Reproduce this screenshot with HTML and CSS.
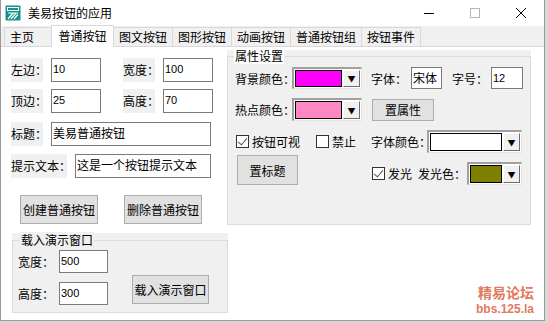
FILE: index.html
```html
<!DOCTYPE html>
<html lang="zh-CN">
<head>
    <meta charset="UTF-8">
    <title>美易按钮的应用</title>
    <link rel="stylesheet" href="styles.css">
</head>
<body>
    <div class="window">
        <div class="titlebar">
            <span class="app-icon">
                <svg width="16" height="16" viewBox="0 0 16 16">
                    <rect x="0.5" y="0.5" width="15" height="15" rx="1" fill="#16918c"/>
                    <rect x="2.5" y="2.5" width="11" height="3" fill="none" stroke="#fff" stroke-width="1"/>
                    <path d="M3 14 L8 8 M6 14 L11 8 M9 14 L13 9.5 M3 8 H13" stroke="#fff" stroke-width="1.2" fill="none"/>
                </svg>
            </span>
            <span class="title">美易按钮的应用</span>
            <div class="caption">
                <span class="cap-btn">
                    <svg width="10" height="10" viewBox="0 0 10 10"><path d="M0 5.5 H10" stroke="#000" stroke-width="1"/></svg>
                </span>
                <span class="cap-btn">
                    <svg width="10" height="10" viewBox="0 0 10 10"><rect x="0.5" y="0.5" width="9" height="9" fill="none" stroke="#b4b4b4" stroke-width="1"/></svg>
                </span>
                <span class="cap-btn">
                    <svg width="10" height="10" viewBox="0 0 10 10"><path d="M0 0 L10 10 M10 0 L0 10" stroke="#000" stroke-width="1"/></svg>
                </span>
            </div>
        </div>

        <div class="tabs">
            <span class="tab tab-home">主页</span>
            <span class="tab active">普通按钮</span>
            <span class="tab">图文按钮</span>
            <span class="tab">图形按钮</span>
            <span class="tab">动画按钮</span>
            <span class="tab">普通按钮组</span>
            <span class="tab">按钮事件</span>
        </div>

        <div class="page">
            <div class="left-col">
                <div class="row row-pos">
                    <span class="lbl w32">左边：</span>
                    <span class="edit num w50">10</span>
                    <span class="lbl w32 ml22">宽度：</span>
                    <span class="edit num w50">100</span>
                </div>
                <div class="row row-size">
                    <span class="lbl w32">顶边：</span>
                    <span class="edit num w50">25</span>
                    <span class="lbl w32 ml22">高度：</span>
                    <span class="edit num w50">70</span>
                </div>
                <div class="row row-title">
                    <span class="lbl w32">标题：</span>
                    <span class="edit w160">美易普通按钮</span>
                </div>
                <div class="row row-tip">
                    <span class="lbl w56">提示文本：</span>
                    <span class="edit w136">这是一个按钮提示文本</span>
                </div>
                <div class="row row-actions">
                    <button class="btn btn-create">创建普通按钮</button>
                    <button class="btn btn-delete">删除普通按钮</button>
                </div>

                <div class="group demo-group">
                    <div class="frame">
                        <span class="legend">载入演示窗口</span>
                        <div class="demo-body">
                            <div class="demo-fields">
                                <div class="demo-row">
                                    <span class="demo-lbl">宽度：</span>
                                    <span class="edit num demo-edit">500</span>
                                </div>
                                <div class="demo-row">
                                    <span class="demo-lbl">高度：</span>
                                    <span class="edit num demo-edit">300</span>
                                </div>
                            </div>
                            <button class="btn btn-load">载入演示窗口</button>
                        </div>
                    </div>
                </div>
            </div>

            <div class="group props-group">
                <div class="frame">
                    <span class="legend legend-props">属性设置</span>
                    <div class="prow prow-1">
                        <span class="plbl w57">背景颜色：</span>
                        <span class="combo w70">
                            <span class="swatch" style="background:#ff00ff"></span>
                            <span class="drop">▼</span>
                        </span>
                        <span class="plbl w40 ml9">字体：</span>
                        <span class="edit font-edit w31">宋体</span>
                        <span class="plbl w39 ml10">字号：</span>
                        <span class="edit num w32">12</span>
                    </div>
                    <div class="prow prow-2">
                        <span class="plbl w57">热点颜色：</span>
                        <span class="combo w70">
                            <span class="swatch" style="background:#ff88c4"></span>
                            <span class="drop">▼</span>
                        </span>
                        <button class="btn btn-prop">置属性</button>
                    </div>
                    <div class="prow prow-3">
                        <label class="check w80 ml1"><span class="box checked"></span>按钮可视</label>
                        <label class="check w55"><span class="box"></span>禁止</label>
                        <span class="plbl w56">字体颜色：</span>
                        <span class="combo w95">
                            <span class="swatch" style="background:#ffffff"></span>
                            <span class="drop">▼</span>
                        </span>
                    </div>
                    <div class="prow prow-4">
                        <button class="btn btn-caption">置标题</button>
                        <div class="glow">
                            <label class="check w46"><span class="box checked"></span>发光</label>
                            <span class="plbl w49">发光色：</span>
                            <span class="combo w55">
                                <span class="swatch" style="background:#808000"></span>
                                <span class="drop">▼</span>
                            </span>
                        </div>
                    </div>
                </div>
            </div>
        </div>

        <div class="watermark">
            <div class="wm-cn">精易论坛</div>
            <div class="wm-en">bbs.125.la</div>
        </div>
    </div>
</body>
</html>
```

FILE: styles.css
```css
* {
    box-sizing: border-box;
}

body {
    margin: 0;
    background: #d8d8d8;
    font-family: "Noto Sans CJK SC", "Liberation Sans", sans-serif;
    font-size: 12px;
    color: #000;
}

.window {
    position: relative;
    width: 545px;
    height: 321px;
    background: #fff;
    border: 1px solid #9a9a9a;
    border-top: none;
    overflow: hidden;
}

/* title bar */
.titlebar {
    height: 26px;
    display: flex;
    align-items: center;
    background: #fff;
}

.app-icon {
    width: 16px;
    height: 16px;
    margin-left: 4px;
    display: flex;
}

.title {
    margin-left: 7px;
    line-height: 16px;
}

.caption {
    margin-left: auto;
    display: flex;
    height: 26px;
}

.cap-btn {
    width: 46px;
    display: flex;
    align-items: center;
    justify-content: center;
}

/* tabs */
.tabs {
    height: 21px;
    background: #f0f0f0;
    border-bottom: 1px solid #d9d9d9;
    display: flex;
    align-items: flex-end;
    padding-left: 4px;
}

.tab {
    height: 19px;
    border: 1px solid #d9d9d9;
    border-bottom: none;
    margin-left: -1px;
    background: #f0f0f0;
    line-height: 17px;
    text-align: center;
    padding: 0 5px;
    white-space: nowrap;
}

.tab-home {
    width: 48px;
    text-align: left;
    padding-left: 5px;
}

.tab.active {
    height: 22px;
    margin-bottom: -1px;
    background: #fff;
    width: 63px;
    line-height: 20px;
    position: relative;
}

/* page */
.page {
    display: flex;
    height: 273px;
    padding-left: 10px;
}

.left-col {
    width: 217px;
    padding-top: 11px;
}

.row {
    display: flex;
    height: 24px;
    align-items: stretch;
}

.row-size {
    margin-top: 7px;
}

.row-title {
    margin-top: 9px;
}

.row-tip {
    margin-top: 8px;
}

.row-actions {
    margin-top: 17px;
    height: 29px;
}

.lbl {
    background: #f0f0f0;
    line-height: 24px;
    white-space: nowrap;
    margin-right: 8px;
}

.edit {
    border: 1px solid #7a7a7a;
    background: #fff;
    line-height: 20px;
    padding-left: 1px;
    white-space: nowrap;
    overflow: hidden;
}

.num {
    font-family: "Liberation Sans", sans-serif;
    font-size: 11px;
}

.w31 { width: 31px; }
.w32 { width: 32px; }
.w39 { width: 39px; }
.w40 { width: 40px; }
.w46 { width: 46px; }
.w49 { width: 49px; }
.w50 { width: 50px; }
.w55 { width: 55px; }
.w56 { width: 56px; }
.w57 { width: 57px; }
.w70 { width: 70px; }
.w80 { width: 80px; }
.w95 { width: 95px; }
.w136 { width: 136px; }
.w160 { width: 160px; }
.ml1 { margin-left: 1px; }
.ml9 { margin-left: 9px; }
.ml10 { margin-left: 10px; }
.ml22 { margin-left: 22px; }

.btn {
    font: inherit;
    background: #e1e1e1;
    border: 1px solid #adadad;
    padding: 0;
    color: #000;
    white-space: nowrap;
}

.btn-create {
    width: 78px;
    margin-left: 9px;
}

.btn-delete {
    width: 78px;
    margin-left: 26px;
}

/* group boxes */
.group {
    background: #f0f0f0;
}

.frame {
    position: relative;
    height: 100%;
    border: 1px solid #dcdcdc;
}

.legend {
    position: absolute;
    top: -9px;
    left: 7px;
    padding: 0 1px;
    line-height: 16px;
    background: #f0f0f0;
}

.demo-group {
    margin-top: 9px;
    margin-left: 1px;
    width: 216px;
    height: 80px;
    padding-top: 7px;
}

.demo-body {
    display: flex;
    padding: 9px 0 0 5px;
}

.demo-row {
    display: flex;
    height: 23px;
    align-items: center;
}

.demo-row + .demo-row {
    margin-top: 9px;
}

.demo-lbl {
    width: 41px;
}

.demo-edit {
    width: 49px;
    height: 23px;
}

.btn-load {
    width: 77px;
    height: 29px;
    margin: 25px 0 0 24px;
}

.props-group {
    margin-left: -1px;
    margin-top: 3px;
    width: 304px;
    height: 175px;
    padding-top: 6px;
}

.legend-props {
    background: #fff;
    top: -9px;
    left: 6px;
}

.prow {
    display: flex;
    align-items: center;
    padding-left: 7px;
}

.prow-1 {
    margin-top: 10px;
    height: 22px;
}

.prow-2 {
    margin-top: 9px;
    height: 23px;
}

.prow-3 {
    margin-top: 9px;
    height: 23px;
}

.prow-4 {
    margin-top: 2px;
    height: 30px;
    align-items: flex-start;
}

.plbl {
    white-space: nowrap;
}

.font-edit,
.prow .num {
    height: 22px;
}

.combo {
    height: 100%;
    display: flex;
    align-items: stretch;
    border-top: 2px solid #a0a0a0;
    border-left: 2px solid #a0a0a0;
    border-right: 1px solid #e3e3e3;
    border-bottom: 1px solid #e3e3e3;
    background: #fff;
    padding: 1px;
}

.swatch {
    flex: 1;
    border: 1px solid #000;
}

.drop {
    width: 17px;
    margin-left: 1px;
    background: #f0f0f0;
    border-right: 1px solid #6d6d6d;
    border-bottom: 1px solid #6d6d6d;
    border-top: 1px solid #fff;
    border-left: 1px solid #fff;
    font-size: 8px;
    display: flex;
    align-items: center;
    justify-content: center;
}

.btn-prop {
    width: 62px;
    height: 22px;
    margin-left: 10px;
}

.check {
    display: flex;
    align-items: center;
    white-space: nowrap;
}

.box {
    width: 13px;
    height: 13px;
    border: 1px solid #333;
    background: #fff;
    margin-right: 3px;
    position: relative;
}

.box.checked::after {
    content: "";
    position: absolute;
    left: 3px;
    top: 0;
    width: 4px;
    height: 8px;
    border-right: 1.5px solid #555;
    border-bottom: 1.5px solid #555;
    transform: rotate(40deg);
}

.btn-caption {
    width: 61px;
    height: 30px;
    margin-left: 2px;
}

.glow {
    display: flex;
    align-items: center;
    height: 23px;
    margin-top: 7px;
    margin-left: 74px;
}

.glow .combo {
    height: 23px;
}

/* watermark */
.watermark {
    position: absolute;
    right: 10px;
    bottom: 4px;
    color: #e27a60;
    font-weight: bold;
    text-align: right;
}

.wm-cn {
    font-size: 14px;
    line-height: 20px;
}

.wm-en {
    font-family: "Liberation Sans", sans-serif;
    font-size: 12px;
    line-height: 14px;
}
```
